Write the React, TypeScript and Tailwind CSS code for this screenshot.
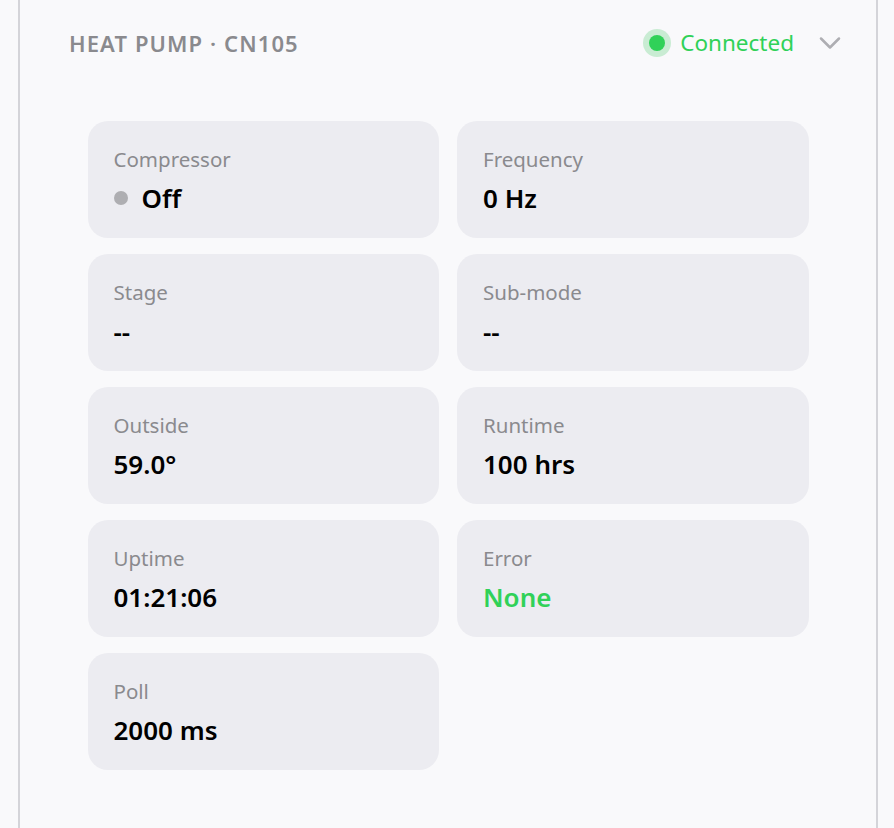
import { ChevronDown } from 'lucide-react'

type Stat = {
  label: string
  value: string
  tone?: 'ok'
  dot?: boolean
}

const stats: Stat[] = [
  { label: 'Compressor', value: 'Off', dot: true },
  { label: 'Frequency', value: '0 Hz' },
  { label: 'Stage', value: '--' },
  { label: 'Sub-mode', value: '--' },
  { label: 'Outside', value: '59.0°' },
  { label: 'Runtime', value: '100 hrs' },
  { label: 'Uptime', value: '01:21:06' },
  { label: 'Error', value: 'None', tone: 'ok' },
  { label: 'Poll', value: '2000 ms' },
]

const StatCard = ({ stat }: { stat: Stat }) => (
  <div className="h-[117px] rounded-[20px] bg-[#ececf1] px-[26px] pt-[24px]">
    <div className="text-[20.5px] leading-[28px] text-[#8a8a8e]">{stat.label}</div>
    <div className="mt-[8px] flex items-center gap-[14px]">
      {stat.dot && <span className="h-[14px] w-[14px] rounded-full bg-[#aeaeb2]"></span>}
      <span
        className={`text-[26px] font-semibold leading-[34px] ${
          stat.tone === 'ok' ? 'text-[#30d158]' : 'text-black'
        }`}
      >
        {stat.value}
      </span>
    </div>
  </div>
)

export default function App() {
  return (
    <div
      className="min-h-[828px] bg-[#f9f9fb] pl-[18px] pr-[16px]"
      style={{ fontFamily: '"Noto Sans", "Open Sans", sans-serif' }}
    >
      <section className="min-h-[828px] border-x-2 border-[#d4d4d9] bg-[#f9f9fb]">
        <header className="flex items-center justify-between pl-[49px] pr-[28px] pt-[25px]">
          <h2 className="text-[22px] font-semibold leading-[32px] tracking-[0.05em] text-[#8a8a8e]">
            HEAT PUMP · CN105
          </h2>
          <div className="flex items-center">
            <span className="h-4 w-4 rounded-full bg-[#30d158] ring-[6px] ring-[#c9ecd3]"></span>
            <span className="ml-[15px] text-[22.5px] leading-[32px] text-[#30d158]">Connected</span>
            <ChevronDown className="ml-[18px] h-9 w-9 text-[#aeaeb2]" strokeWidth={1.7} />
          </div>
        </header>

        <div className="mx-auto mt-[60px] grid w-[721px] grid-cols-2 gap-x-[18px] gap-y-[16px]">
          {stats.map((stat) => (
            <StatCard key={stat.label} stat={stat} />
          ))}
        </div>
      </section>
    </div>
  )
}
